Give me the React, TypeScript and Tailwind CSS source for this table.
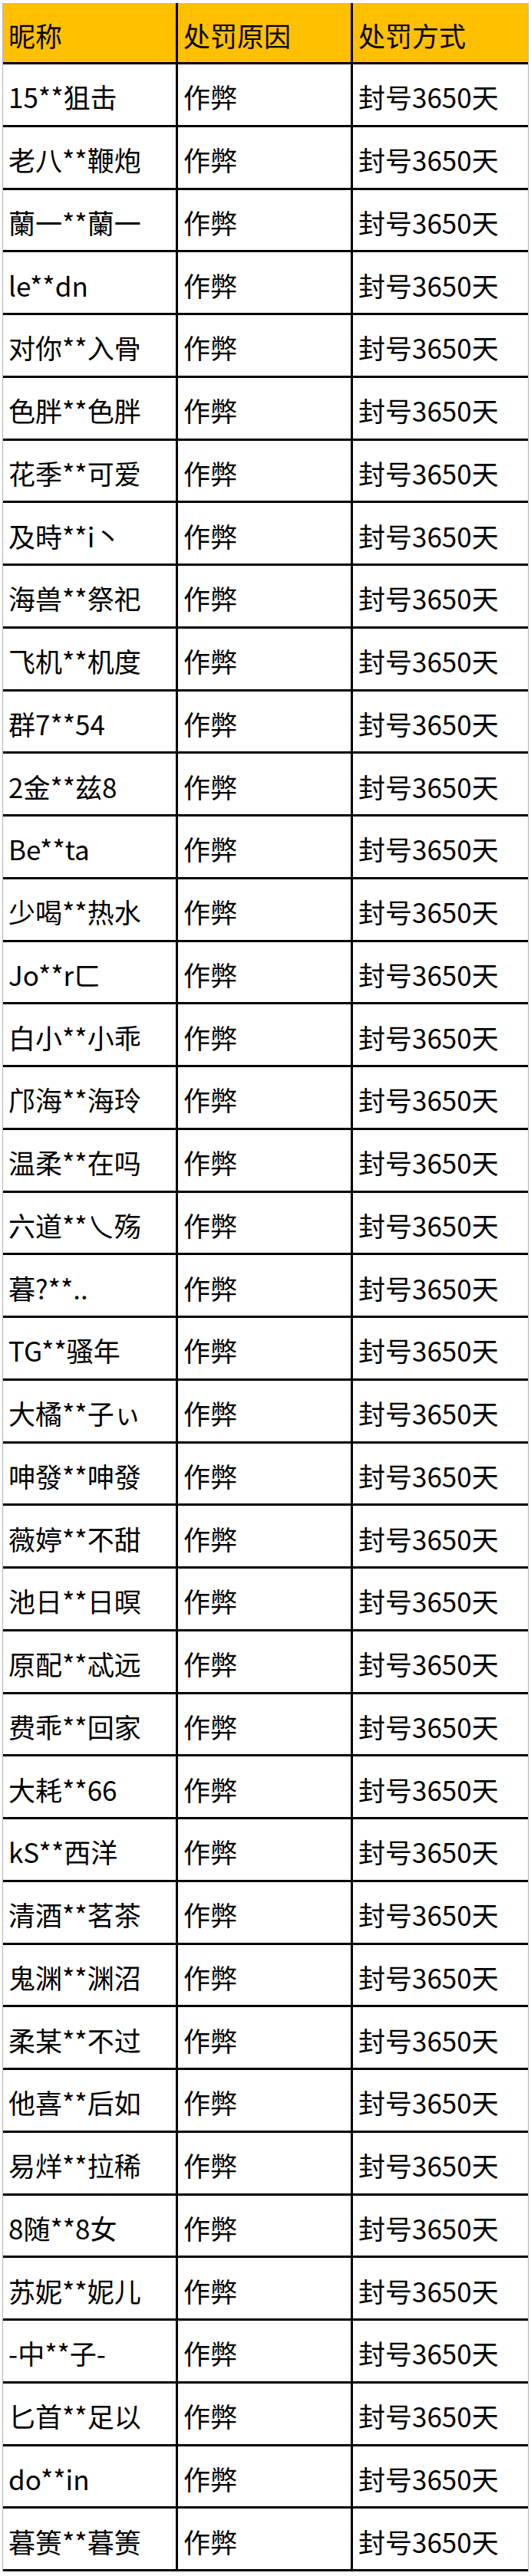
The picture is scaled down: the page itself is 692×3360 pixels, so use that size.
const names = [
  "15**狙击",
  "老八**鞭炮",
  "蘭一**蘭一",
  "le**dn",
  "对你**入骨",
  "色胖**色胖",
  "花季**可爱",
  "及時**i丶",
  "海兽**祭祀",
  "飞机**机度",
  "群7**54",
  "2金**兹8",
  "Be**ta",
  "少喝**热水",
  "Jo**rㄈ",
  "白小**小乖",
  "邝海**海玲",
  "温柔**在吗",
  "六道**乀殇",
  "暮?**..",
  "TG**骚年",
  "大橘**子ぃ",
  "呻發**呻發",
  "薇婷**不甜",
  "池日**日暝",
  "原配**忒远",
  "费乖**回家",
  "大耗**66",
  "kS**西洋",
  "清酒**茗茶",
  "鬼渊**渊沼",
  "柔某**不过",
  "他喜**后如",
  "易烊**拉稀",
  "8随**8女",
  "苏妮**妮儿",
  "-中**子-",
  "匕首**足以",
  "do**in",
  "暮箦**暮箦",
];

const font = {
  fontFamily: '"Noto Sans CJK SC", "Noto Sans", sans-serif',
};

function Cell({ children, last }: { children: React.ReactNode; last?: boolean }) {
  return (
    <div
      className={
        last
          ? "flex items-center pl-[7px] pt-[5px] w-[227px] shrink-0 leading-none"
          : "flex items-center pl-[7px] pt-[5px] w-[228px] shrink-0 border-r-[3px] border-black leading-none"
      }
    >
      {children}
    </div>
  );
}

export default function App() {
  return (
    <div className="w-[692px] h-[3360px] bg-white pt-[4px] pl-[3px]" style={font}>
      <div className="w-[686px] border-l border-r border-[#b4b4b4] text-[35px] text-black">
        <div className="flex h-[80px] bg-[#ffc000] border-b-[3px] border-black">
          <Cell>昵称</Cell>
          <Cell>处罚原因</Cell>
          <Cell last>处罚方式</Cell>
        </div>
        {names.map((name, i) => (
          <div key={i} className="flex h-[81.75px] border-b-[3px] border-black">
            <Cell>{name}</Cell>
            <Cell>作弊</Cell>
            <Cell last>封号3650天</Cell>
          </div>
        ))}
      </div>
    </div>
  );
}
